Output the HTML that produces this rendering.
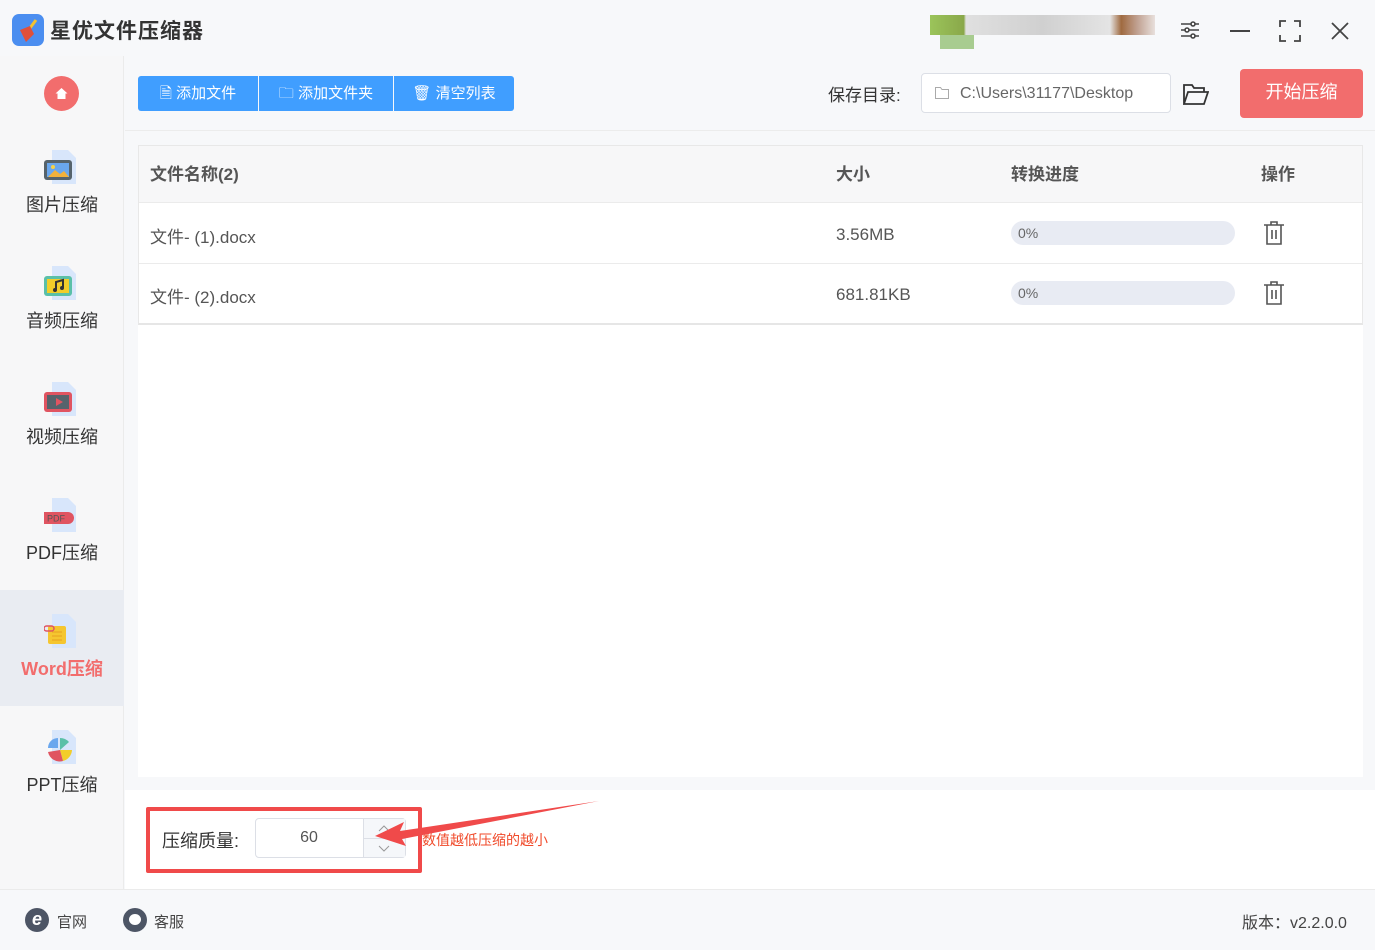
<!DOCTYPE html>
<html><head><meta charset="utf-8"><style>
*{margin:0;padding:0;box-sizing:border-box}
body{width:1375px;height:950px;overflow:hidden;background:#f7f8fa;font-family:"Liberation Sans","Noto Sans CJK SC",sans-serif;color:#333;position:relative}
.a{position:absolute}
.side{left:0;top:56px;width:124px;height:834px;background:#f7f7f8;border-right:1px solid #ebebeb}
.item{position:absolute;left:0;width:124px;height:116px}
.item .ic{position:absolute;left:44px;top:22px;width:36px;height:38px}
.item .lb{position:absolute;left:0;width:124px;top:65px;text-align:center;font-size:18px;color:#333}
.btn{top:76px;height:35px;background:#409eff;color:#fff;font-size:15px;line-height:35px;text-align:center}
.th{top:145px;height:58px;line-height:60px;font-size:17px;font-weight:bold;color:#555}
.td{font-size:17px;color:#555}
.prog{width:224px;height:24px;border-radius:12px;background:#e8ebf3;font-size:14px;color:#666;line-height:24px;padding-left:7px}
</style></head><body>
<!-- title bar -->
<div class="a" style="left:12px;top:14px;width:32px;height:32px;border-radius:7px;background:#4b8ef0"></div>
<svg class="a" style="left:12px;top:14px" width="32" height="32"><path d="M24 6 L18 14" stroke="#f2c230" stroke-width="3"/><path d="M8 16 L18 12 L22 20 L14 28 Z" fill="#e0503a"/></svg>
<div class="a" style="left:50px;top:15px;font-size:21px;font-weight:bold;color:#333;letter-spacing:1px">星优文件压缩器</div>
<div class="a" style="left:930px;top:15px;width:225px;height:20px;background:linear-gradient(90deg,#9bc45a 0,#8aa84a 15%,#e0e0e0 16%,#d0d0d0 50%,#e4e4e4 80%,#a06a40 85%,#c0a090 92%,#e8e0dc 100%)"></div>
<div class="a" style="left:940px;top:35px;width:34px;height:14px;background:#a8cc90"></div>
<svg class="a" style="left:1178px;top:18px" width="24" height="24" stroke="#444" stroke-width="1.6" fill="none"><path d="M3 6h18M3 12h18M3 18h18"/><circle cx="15" cy="6" r="2" fill="#fff"/><circle cx="9" cy="12" r="2" fill="#fff"/><circle cx="15" cy="18" r="2" fill="#fff"/></svg>
<div class="a" style="left:1230px;top:30px;width:20px;height:1.6px;background:#444"></div>
<svg class="a" style="left:1279px;top:20px" width="22" height="22" stroke="#444" stroke-width="1.8" fill="none"><path d="M1 7V1h6M15 1h6v6M21 15v6h-6M7 21H1v-6"/></svg>
<svg class="a" style="left:1330px;top:21px" width="20" height="20" stroke="#444" stroke-width="1.8"><path d="M2 2L18 18M18 2L2 18"/></svg>

<!-- sidebar -->
<div class="a side">
  <div class="a" style="left:44px;top:20px;width:35px;height:35px;border-radius:50%;background:#f26d6d"></div>
  <svg class="a" style="left:54px;top:30px" width="15" height="15"><path d="M7.5 2L1.5 7.5H3.5V13H11.5V7.5H13.5Z" fill="#fff"/></svg>
  <div class="item" style="top:70px"><svg class="ic" viewBox="0 0 36 38"><path d="M8 2h16l8 8v26H8z" fill="#d8e6fb"/><rect x="0" y="12" width="28" height="20" rx="3" fill="#56636c"/><rect x="3" y="15" width="22" height="14" fill="#6aa7ee"/><path d="M4 29l7-7 5 4 4-3 5 6z" fill="#f2b13b"/><circle cx="9" cy="19" r="2" fill="#f6d24a"/></svg><div class="lb">图片压缩</div></div>
  <div class="item" style="top:186px"><svg class="ic" viewBox="0 0 36 38"><path d="M8 2h16l8 8v26H8z" fill="#d8e6fb"/><rect x="0" y="12" width="28" height="20" rx="3" fill="#5ac0a8"/><rect x="3" y="15" width="22" height="14" fill="#f2cd2a"/><path d="M12 26v-8l7-2v8" stroke="#333" stroke-width="2" fill="none"/><circle cx="11" cy="26" r="2" fill="#333"/><circle cx="18" cy="24" r="2" fill="#333"/></svg><div class="lb">音频压缩</div></div>
  <div class="item" style="top:302px"><svg class="ic" viewBox="0 0 36 38"><path d="M8 2h16l8 8v26H8z" fill="#d8e6fb"/><rect x="0" y="12" width="28" height="20" rx="3" fill="#e05461"/><rect x="3" y="15" width="22" height="14" fill="#56636c"/><path d="M12 18v8l7-4z" fill="#e05461"/></svg><div class="lb">视频压缩</div></div>
  <div class="item" style="top:418px"><svg class="ic" viewBox="0 0 36 38"><path d="M8 2h16l8 8v26H8z" fill="#d8e6fb"/><path d="M0 16h24a5 5 0 0 1 0 12H0z" fill="#e05461"/><text x="3" y="25.5" font-size="9" fill="#555" font-family="Liberation Sans">PDF</text></svg><div class="lb">PDF压缩</div></div>
  <div class="item" style="top:534px;background:#e9ecf2"><svg class="ic" viewBox="0 0 36 38"><path d="M8 2h16l8 8v26H8z" fill="#d8e6fb"/><rect x="4" y="14" width="18" height="18" rx="2" fill="#f5c630"/><path d="M8 20h10M8 24h10M8 28h10" stroke="#e8a020"/><rect x="0" y="14" width="10" height="5" rx="2.5" fill="none" stroke="#e05461" stroke-width="1.5"/></svg><div class="lb" style="color:#f26d6d;font-weight:bold">Word压缩</div></div>
  <div class="item" style="top:650px"><svg class="ic" viewBox="0 0 36 38"><path d="M8 2h16l8 8v26H8z" fill="#d8e6fb"/><path d="M16 22V10a12 12 0 0 1 9 4z" fill="#5ac0a8"/><path d="M16 22h12a12 12 0 0 1-9 11z" fill="#f2cd2a"/><path d="M16 22l3 11a12 12 0 0 1-15-9z" fill="#e05461"/><path d="M14 20H4a10 10 0 0 1 10-10z" fill="#6aa7ee"/></svg><div class="lb">PPT压缩</div></div>
</div>

<!-- toolbar -->
<div class="a" style="left:125px;top:56px;width:1250px;height:75px;border-bottom:1px solid #ececec"></div>
<div class="a btn" style="left:138px;width:120px;border-radius:3px 0 0 3px">🗎 添加文件</div>
<div class="a btn" style="left:259px;width:134px">🗀 添加文件夹</div>
<div class="a btn" style="left:394px;width:120px;border-radius:0 3px 3px 0">🗑 清空列表</div>
<div class="a" style="left:828px;top:81px;font-size:17px;color:#333">保存目录:</div>
<div class="a" style="left:921px;top:73px;width:250px;height:40px;border:1px solid #dcdfe6;border-radius:4px;background:#fff;font-size:16px;color:#666;line-height:40px;padding-left:38px">C:\Users\31177\Desktop</div>
<svg class="a" style="left:935px;top:87px" width="14" height="12" fill="none" stroke="#aaa"><path d="M.5 .5h5l1.5 2h6.5v9H.5z"/></svg>
<svg class="a" style="left:1183px;top:83px" width="26" height="22" fill="none" stroke="#333" stroke-width="1.8"><path d="M1 21V2h8l2 3h10v4M1 21l4-12h20l-4 12z"/></svg>
<div class="a" style="left:1240px;top:69px;width:123px;height:49px;background:#f26d6d;border-radius:4px;color:#fff;font-size:18px;text-align:center;line-height:47px">开始压缩</div>

<!-- table -->
<div class="a" style="left:138px;top:145px;width:1225px;height:632px;background:#fff"></div>
<div class="a" style="left:138px;top:145px;width:1225px;height:180px;border:1px solid #e8e8e8;border-bottom:2px solid #e6e6e6"></div>
<div class="a" style="left:139px;top:146px;width:1223px;height:57px;background:#f7f7f8;border-bottom:1px solid #ebebeb"></div>
<div class="a" style="left:139px;top:263px;width:1223px;height:1px;background:#ebebeb"></div>
<div class="a th" style="left:150px">文件名称(2)</div>
<div class="a th" style="left:836px">大小</div>
<div class="a th" style="left:1011px">转换进度</div>
<div class="a th" style="left:1261px">操作</div>
<div class="a td" style="left:150px;top:223px">文件- (1).docx</div>
<div class="a td" style="left:836px;top:225px">3.56MB</div>
<div class="a prog" style="left:1011px;top:221px">0%</div>
<div class="a td" style="left:150px;top:283px">文件- (2).docx</div>
<div class="a td" style="left:836px;top:285px">681.81KB</div>
<div class="a prog" style="left:1011px;top:281px">0%</div>
<svg class="a" style="left:1263px;top:221px" width="22" height="24" fill="none" stroke="#555" stroke-width="1.6"><path d="M1 4h20M8 4V1h6v3M4 4v19h14V4M9 9v9M13 9v9"/></svg>
<svg class="a" style="left:1263px;top:281px" width="22" height="24" fill="none" stroke="#555" stroke-width="1.6"><path d="M1 4h20M8 4V1h6v3M4 4v19h14V4M9 9v9M13 9v9"/></svg>

<!-- bottom -->
<div class="a" style="left:125px;top:790px;width:1250px;height:99px;background:#fff"></div>
<div class="a" style="left:146px;top:807px;width:276px;height:66px;border:4px solid #f04a4a;border-radius:2px"></div>
<div class="a" style="left:162px;top:827px;font-size:18px;color:#333">压缩质量:</div>
<div class="a" style="left:255px;top:818px;width:151px;height:40px;border:1px solid #dcdfe6;border-radius:4px;background:#fff"></div>
<div class="a" style="left:255px;top:829px;width:108px;text-align:center;font-size:16px;color:#555">60</div>
<div class="a" style="left:363px;top:819px;width:42px;height:38px;background:#f5f7fa;border-left:1px solid #dcdfe6"></div>
<div class="a" style="left:363px;top:838px;width:42px;height:1px;background:#dcdfe6"></div>
<svg class="a" style="left:377px;top:824px" width="14" height="30" fill="none" stroke="#999"><path d="M2 7l5-5 5 5M2 22l5 5 5-5"/></svg>
<div class="a" style="left:422px;top:830px;font-size:14px;color:#f04a2a">数值越低压缩的越小</div>
<svg class="a" style="left:370px;top:798px" width="232" height="60"><path d="M229 3 L30 33 L34 24 L5 38 L36 48 L32 41 Z" fill="#f04a4a"/></svg>

<!-- footer -->
<div class="a" style="left:0;top:889px;width:1375px;height:1px;background:#ebebeb"></div>
<div class="a" style="left:25px;top:908px;width:24px;height:24px;border-radius:50%;background:#4d5565;color:#fff;font-size:18px;font-weight:bold;text-align:center;line-height:23px;font-style:italic">e</div>
<div class="a" style="left:57px;top:911px;font-size:15px;color:#444">官网</div>
<div class="a" style="left:123px;top:908px;width:24px;height:24px;border-radius:50%;background:#4d5565"></div>
<div class="a" style="left:129px;top:914px;width:12px;height:11px;border-radius:50%;background:#fff"></div>
<div class="a" style="left:154px;top:911px;font-size:15px;color:#444">客服</div>
<div class="a" style="left:1242px;top:909px;font-size:16px;color:#444">版本：v2.2.0.0</div>
</body></html>
